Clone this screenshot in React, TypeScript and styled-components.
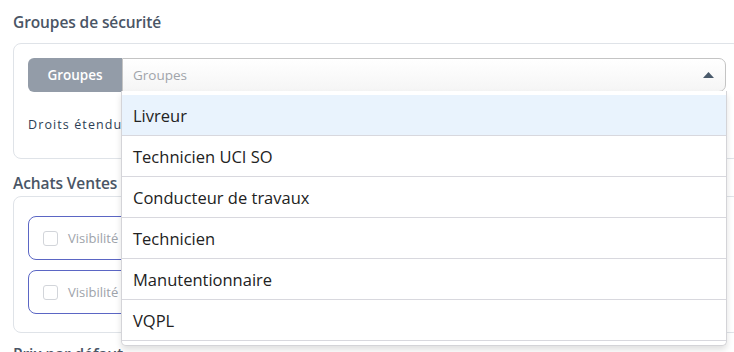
import React from "react";
import styled, { createGlobalStyle } from "styled-components";

const GlobalStyle = createGlobalStyle`
  html, body { margin: 0; padding: 0; background: #fff; overflow: hidden; }
  body { font-family: "Open Sans", "Liberation Sans", sans-serif; }
  * { box-sizing: border-box; }
`;

const Page = styled.div`
  width: 741px;
  padding: 11px 0 0 13px;
  display: flex;
  flex-direction: column;
`;

const SectionTitle = styled.h3<{ $h?: number }>`
  margin: 0;
  font-family: "Open Sans", "Liberation Sans", sans-serif;
  font-size: 15.5px;
  font-weight: 600;
  line-height: 22px;
  color: #4a5565;
  letter-spacing: -0.1px;
  height: ${(p) => p.$h ?? 32}px;
`;

const Card = styled.div<{ $h: number; $pt: number }>`
  width: 728px;
  height: ${(p) => p.$h}px;
  border: 1px solid #dfe3e8;
  border-radius: 8px;
  padding: ${(p) => p.$pt}px 14px 0 14px;
  display: flex;
  flex-direction: column;
  gap: 10px;
`;

const Gap = styled.div<{ $h: number }>`
  height: ${(p) => p.$h}px;
`;

const InputGroup = styled.div`
  display: flex;
  height: 34px;
  position: relative;
`;

const Addon = styled.div`
  width: 94px;
  background: #939ca8;
  color: #fff;
  font-size: 13.5px;
  font-weight: 600;
  border-radius: 6px 0 0 6px;
  display: flex;
  align-items: center;
  justify-content: center;
`;

const SelectBox = styled.div`
  flex: 1;
  position: relative;
  border: 1px solid #c4c4c4;
  border-radius: 0 7px 7px 0;
  background: linear-gradient(#ffffff 0%, #f5f5f5 100%);
  display: flex;
  align-items: center;
  padding: 0 11px 0 10px;
  color: #a0a4aa;
  font-size: 13.5px;
`;

const Placeholder = styled.span`
  flex: 1;
`;

const Dropdown = styled.ul`
  position: absolute;
  top: 32px;
  left: -2px;
  right: -2px;
  margin: 0;
  padding: 4px 0 4px;
  list-style: none;
  background: #fff;
  border: 1px solid #d4d4d8;
  border-top: none;
  border-radius: 0 0 5px 5px;
  box-shadow: 0 4px 6px rgba(0, 0, 0, 0.12);
  z-index: 10;
`;

const Option = styled.li<{ $active?: boolean }>`
  height: 41px;
  padding: 1px 11px 0;
  display: flex;
  align-items: center;
  border-bottom: 1px solid #d8d8de;
  background: ${(p) => (p.$active ? "#e9f3fd" : "#fff")};
  color: #222;
  font-size: 16.5px;
  font-family: "Open Sans", "Liberation Sans", sans-serif;
`;

const Rights = styled.div`
  font-size: 12.5px;
  color: #2d3e55;
  letter-spacing: 1.1px;
  padding-top: 14px;
`;

const CheckRow = styled.label`
  height: 44px;
  border: 1px solid #5b66c4;
  border-radius: 8px;
  display: flex;
  align-items: center;
  gap: 10px;
  padding-left: 14px;
  color: #9ea3aa;
  font-size: 13px;
`;

const Box = styled.span`
  width: 15px;
  height: 15px;
  border: 1px solid #d2d5da;
  border-radius: 3px;
  background: #fff;
`;

const Caret = () => (
  <svg width="11" height="6" viewBox="0 0 11 6">
    <polygon points="0,6 5.5,0 11,6" fill="#4a5a6b" />
  </svg>
);

const options = [
  "Livreur",
  "Technicien UCI SO",
  "Conducteur de travaux",
  "Technicien",
  "Manutentionnaire",
  "VQPL",
];

export default function App() {
  return (
    <>
      <GlobalStyle />
      <Page>
        <SectionTitle>Groupes de sécurité</SectionTitle>
        <Card $h={116} $pt={14}>
          <InputGroup>
            <Addon>Groupes</Addon>
            <SelectBox>
              <Placeholder>Groupes</Placeholder>
              <Caret />
              <Dropdown>
                {options.map((o, i) => (
                  <Option key={o} $active={i === 0}>
                    {o}
                  </Option>
                ))}
              </Dropdown>
            </SelectBox>
          </InputGroup>
          <Rights>Droits étendus</Rights>
        </Card>
        <Gap $h={13} />
        <SectionTitle $h={24}>Achats Ventes</SectionTitle>
        <Card $h={137} $pt={19}>
          <CheckRow>
            <Box />
            Visibilité des achats
          </CheckRow>
          <CheckRow>
            <Box />
            Visibilité des ventes
          </CheckRow>
        </Card>
        <Gap $h={10} />
        <SectionTitle>Prix par défaut</SectionTitle>
      </Page>
    </>
  );
}
